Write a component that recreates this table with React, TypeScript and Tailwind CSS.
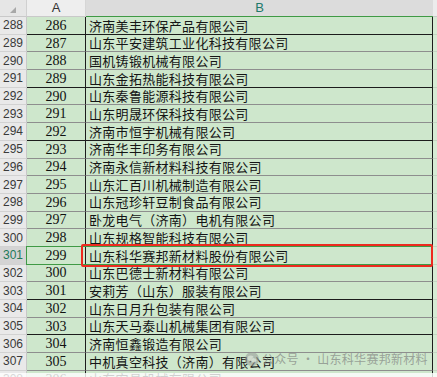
import React from "react";

type Row = { n: number; a: number; b: string; line: "black" | "gray" };

const ROWS: Row[] = [
  { n: 288, a: 286, b: "济南美丰环保产品有限公司", line: "black" },
  { n: 289, a: 287, b: "山东平安建筑工业化科技有限公司", line: "gray" },
  { n: 290, a: 288, b: "国机铸锻机械有限公司", line: "gray" },
  { n: 291, a: 289, b: "山东金拓热能科技有限公司", line: "black" },
  { n: 292, a: 290, b: "山东秦鲁能源科技有限公司", line: "gray" },
  { n: 293, a: 291, b: "山东明晟环保科技有限公司", line: "gray" },
  { n: 294, a: 292, b: "济南市恒宇机械有限公司", line: "black" },
  { n: 295, a: 293, b: "济南华丰印务有限公司", line: "gray" },
  { n: 296, a: 294, b: "济南永信新材料科技有限公司", line: "gray" },
  { n: 297, a: 295, b: "山东汇百川机械制造有限公司", line: "gray" },
  { n: 298, a: 296, b: "山东冠珍轩豆制食品有限公司", line: "gray" },
  { n: 299, a: 297, b: "卧龙电气（济南）电机有限公司", line: "gray" },
  { n: 300, a: 298, b: "山东规格智能科技有限公司", line: "gray" },
  { n: 301, a: 299, b: "山东科华赛邦新材料股份有限公司", line: "gray" },
  { n: 302, a: 300, b: "山东巴德士新材料有限公司", line: "gray" },
  { n: 303, a: 301, b: "安莉芳（山东）服装有限公司", line: "black" },
  { n: 304, a: 302, b: "山东日月升包装有限公司", line: "gray" },
  { n: 305, a: 303, b: "山东天马泰山机械集团有限公司", line: "black" },
  { n: 306, a: 304, b: "济南恒鑫锻造有限公司", line: "gray" },
  { n: 307, a: 305, b: "中机真空科技（济南）有限公司", line: "gray" },
  { n: 308, a: 306, b: "山东宏昌机械有限公司", line: "gray" },
];

const SELECTED = 301;

function SheetRow({ row }: { row: Row }) {
  const sel = row.n === SELECTED;
  const line = row.line === "black" ? "border-b-[#1c1c1c]" : "border-b-[#8e8e8e]";
  return (
    <div className="flex h-[17.7px] shrink-0">
      <div
        className={
          "w-[27px] shrink-0 flex items-center justify-center border-b border-r border-b-[#d2d2d2] text-[12px] " +
          (sel
            ? "bg-[#d4d4d4] text-[#1e7a5a] border-r-[#3f9a45]"
            : "bg-[#e9e9e9] text-[#3a3a3a] border-r-[#c8c8c8]")
        }
        style={{ fontFamily: '"Liberation Sans", Arial, sans-serif' }}
      >
        {row.n}
      </div>
      <div
        className={"w-[59px] shrink-0 flex items-center justify-center bg-[#cee7cc] border-b border-r border-r-[#1c1c1c] text-[14px] text-[#111] " + line}
        style={{ fontFamily: '"Liberation Serif", "Times New Roman", serif' }}
      >
        {row.a}
      </div>
      <div
        className={"w-[347px] shrink-0 flex items-center pl-[3px] bg-[#cee7cc] border-b border-r border-r-[#1c1c1c] text-[13px] tracking-[0.3px] text-[#151515] whitespace-nowrap overflow-hidden " + line}
        style={{ fontFamily: '"Noto Sans CJK SC", "Noto Sans", sans-serif' }}
      >
        {row.b}
      </div>
      <div className="flex-1 bg-[#d6ebd4] border-b border-b-[#c4d4c2]" />
    </div>
  );
}

export default function App() {
  return (
    <div className="relative w-[437px] h-[377px] overflow-hidden bg-white select-none">
      <div className="flex h-[17px] shrink-0">
        <div className="relative w-[27px] shrink-0 bg-[#e6e6e6] border-b border-r border-b-[#c9c9c9] border-r-[#d0d0d0]">
          <svg className="absolute left-[10px] top-[7px]" width="6" height="6" viewBox="0 0 6 6">
            <polygon points="6,0 6,6 0,6" fill="#a8a8a8" />
          </svg>
        </div>
        <div
          className="w-[59px] shrink-0 flex items-center justify-center bg-[#eeeeee] border-b border-r border-b-[#c9c9c9] border-r-[#d6d6d6] text-[13px] text-[#333]"
          style={{ fontFamily: '"Liberation Sans", Arial, sans-serif' }}
        >
          A
        </div>
        <div
          className="w-[347px] shrink-0 flex items-center justify-center bg-[#dcdcdc] border-b border-b-[#3f9a45] text-[13px] text-[#1e7a6a]"
          style={{ fontFamily: '"Liberation Sans", Arial, sans-serif' }}
        >
          B
        </div>
        <div className="flex-1 bg-[#ececec] border-b border-b-[#c9c9c9]" />
      </div>

      {ROWS.map((r) => (
        <SheetRow key={r.n} row={r} />
      ))}

      {/* selection outline on row 301 */}
      <div className="absolute left-[26px] top-[246px] w-[407px] h-[19px] border border-[#3f9a45]" />

      {/* red highlight box */}
      <div className="absolute left-[81px] top-[244px] w-[352px] h-[23px] border-2 border-[#ee2a1f] rounded-[2px]" />

      {/* watermark */}
      <div className="absolute left-[245px] top-[350px] flex items-center gap-[3px] text-[12px] text-[#8a8f8a]/80"
        style={{ fontFamily: '"Noto Sans CJK SC", "Noto Sans", sans-serif' }}
      >
        <svg width="14" height="14" viewBox="0 0 16 16">
          <circle cx="8" cy="8" r="8" fill="#9a9e9a" opacity="0.6" />
          <ellipse cx="6.5" cy="7" rx="3.6" ry="3" fill="#d8e4d6" opacity="0.8" />
          <ellipse cx="10" cy="9.5" rx="3" ry="2.5" fill="#d8e4d6" opacity="0.8" />
        </svg>
        <span className="tracking-[0.3px]">公众号 · 山东科华赛邦新材料</span>
      </div>

      {/* bottom fade */}
      <div className="absolute left-0 right-0 top-[373px] h-[4px] bg-white/80" />
    </div>
  );
}
